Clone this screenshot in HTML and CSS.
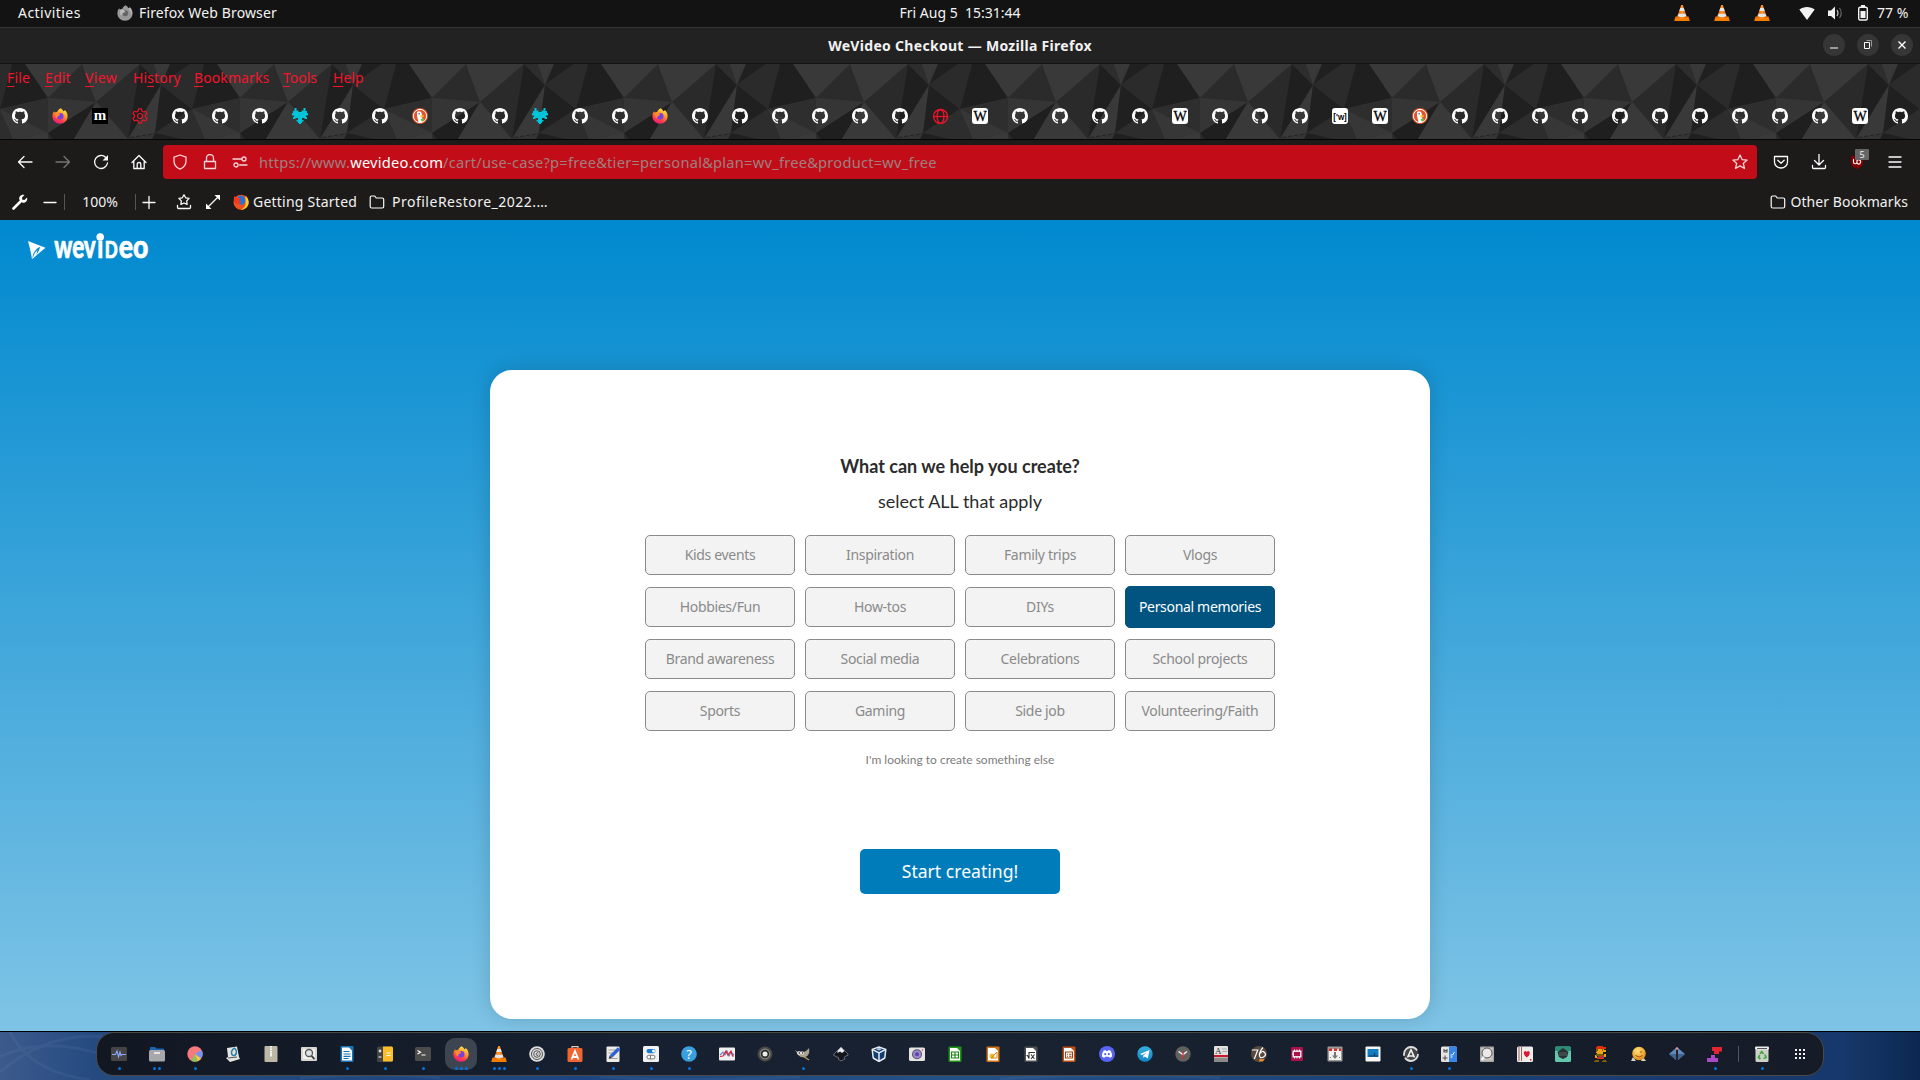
FILE: index.html
```html
<!DOCTYPE html>
<html lang="en">
<head>
<meta charset="utf-8">
<title>WeVideo Checkout</title>
<link rel="stylesheet" href="styles.css">
</head>
<body>
<svg class="defs" width="0" height="0" aria-hidden="true">
<defs>
<linearGradient id="ffg" x1=".75" y1="0" x2=".3" y2="1"><stop offset="0" stop-color="#fff04a"/><stop offset=".4" stop-color="#ff9a28"/><stop offset=".75" stop-color="#ff3a4c"/><stop offset="1" stop-color="#e3158a"/></linearGradient>
<linearGradient id="cone" x1="0" x2="1" y1="0" y2="0"><stop offset="0" stop-color="#e05a00"/><stop offset=".5" stop-color="#ff9a2c"/><stop offset="1" stop-color="#d85400"/></linearGradient>
<linearGradient id="tg" x1="0" x2="0" y1="0" y2="1"><stop offset="0" stop-color="#37aee2"/><stop offset="1" stop-color="#0f86c4"/></linearGradient>
<radialGradient id="gold" cx=".4" cy=".3" r=".7"><stop offset="0" stop-color="#ffe27a"/><stop offset="1" stop-color="#e08f14"/></radialGradient>
<symbol id="gh" viewBox="0 0 16 16"><path fill="#fff" d="M8 0C3.58 0 0 3.58 0 8c0 3.54 2.29 6.53 5.47 7.59.4.07.55-.17.55-.38 0-.19-.01-.82-.01-1.49-2.01.37-2.53-.49-2.69-.94-.09-.23-.48-.94-.82-1.13-.28-.15-.68-.52-.01-.53.63-.01 1.08.58 1.23.82.72 1.21 1.87.87 2.33.66.07-.52.28-.87.51-1.07-1.78-.2-3.64-.89-3.64-3.95 0-.87.31-1.59.82-2.15-.08-.2-.36-1.02.08-2.12 0 0 .67-.21 2.2.82.64-.18 1.32-.27 2-.27s1.36.09 2 .27c1.53-1.04 2.2-.82 2.2-.82.44 1.1.16 1.92.08 2.12.51.56.82 1.27.82 2.15 0 3.07-1.87 3.75-3.65 3.95.29.25.54.73.54 1.48 0 1.07-.01 1.93-.01 2.2 0 .21.15.46.55.38A8.01 8.01 0 0016 8c0-4.42-3.58-8-8-8z"/></symbol>
<symbol id="ff" viewBox="0 0 16 16"><path fill="url(#ffg)" d="M8.6.2c1.6 1 2.4 2 2.7 3.1 1-.1 1.300-.6 1.400-1.200C14.600 3.600 15.600 5.800 15.600 8.300c0 4.200-3.400 7.500-7.600 7.500S.4 12.500.4 8.300C.4 6.300 1 4.600 2.200 3.300l.5 1.300c.7-.6 1.600-.8 2.500-.6.400-1.600 1.600-2.900 3.400-3.800z"/><circle cx="8.200" cy="8.300" r="3.300" fill="#7a3fe0"/><path fill="#ff8b2a" d="M3.200 5.200c1.800-.9 3.700-.3 5 1.100-.2 1.300-1.600 1.300-2.500 2-.7.800 0 2.400-1.400 1.900C3 8.900 2.700 6.700 3.200 5.200z"/></symbol>
<symbol id="ffgray" viewBox="0 0 16 16"><path fill="#999" d="M8.600.2c1.600 1 2.400 2 2.700 3.100 1-.1 1.300-.6 1.400-1.200C14.600 3.600 15.600 5.800 15.600 8.300c0 4.200-3.400 7.500-7.600 7.500S.4 12.500.4 8.300C.4 6.300 1 4.600 2.200 3.300l.5 1.300c.7-.6 1.600-.8 2.500-.6.400-1.600 1.600-2.900 3.400-3.800z"/><circle cx="8.200" cy="8.300" r="3" fill="#666"/><path fill="#bbb" d="M3.200 5.200c1.800-.9 3.700-.3 5 1.100-.2 1.300-1.600 1.300-2.500 2-.7.800 0 2.400-1.400 1.900C3 8.900 2.700 6.700 3.200 5.200zM11.500 4c2 1.500 3 4 2.300 6.500L15 8C15 6 14 4 12.600 2.500z"/></symbol>
<symbol id="ffold" viewBox="0 0 16 16"><circle cx="8" cy="8.300" r="7.500" fill="#f4511e"/><path fill="#ffc928" d="M12.500 1.500c4 3.500 4.300 9 .8 12.300-1.500 1.300-3.800 2.200-5.800 2 4-1 5.500-4.500 5-8z"/><path fill="#2a6fd6" d="M5 2.500C7.500.5 11 1.500 12 5c.8 3-.5 5.500-3.300 5.700C6.500 10.700 5 9.500 4.800 8z"/><path fill="#f33a1d" d="M1 3.500l.5-1.500L4 4c1.500-.3 3 0 3.500.7L6 6.500l2 1.800-2 1.500-3 .2L.7 7z"/></symbol>
<symbol id="m" viewBox="0 0 16 16"><path d="M0 0h16v16H0z"/><text x="8" y="12" text-anchor="middle" font-family="Liberation Serif, serif" font-weight="700" font-size="15" fill="#fff">m</text></symbol>
<symbol id="w" viewBox="0 0 16 16"><rect width="16" height="16" rx="3" fill="#fff"/><text x="8" y="12.800" text-anchor="middle" font-family="Liberation Serif, serif" font-size="14" fill="#000" stroke="#000" stroke-width=".3">W</text></symbol>
<symbol id="wb" viewBox="0 0 16 16"><rect width="16" height="16" rx="3" fill="#fff"/><text x="1.300" y="12" font-family="Liberation Sans, sans-serif" font-weight="700" font-size="9.500" textLength="13.500" lengthAdjust="spacingAndGlyphs">['w]</text></symbol>
<symbol id="gear" viewBox="0 0 16 16"><g fill="none" stroke="#e8142a" stroke-width="1.200" stroke-linejoin="round"><path d="M6.600.8h2.800l.5 2.300 1.500.9 2.300-.8 1.400 2.500L13.400 7.300v1.500l1.700 1.600-1.400 2.400-2.300-.7-1.500.9-.5 2.200H6.600l-.5-2.200-1.500-.9-2.300.7-1.400-2.400 1.700-1.600V7.300L.9 5.700l1.400-2.500 2.300.8 1.500-.9z"/><circle cx="8" cy="8" r="2.500"/></g></symbol>
<symbol id="teal" viewBox="0 0 16 16"><path fill="#00c4d8" d="M2.500 0h2v2.500h2V4h3V2.500h2V0h2v3H15v2h1v2.500h-2V9h1v2h-2.500v-1H10v2h1.500v1.500H10V15H9v1H7v-1H6v-1.500H4.500V12H6v-2H3.500v1H1V9h1V7.500H0V5h1V3h1.500z"/></symbol>
<symbol id="ddg" viewBox="0 0 16 16"><circle cx="8" cy="8" r="8" fill="#e2552c"/><circle cx="8" cy="8" r="6.600" fill="none" stroke="#fff"/><path fill="#fff" d="M5 4c2-1.500 4.500-.5 4.800 2l.7 8c-1.500.6-3 .5-4 0L5 8z"/><path fill="#fdc31b" d="M8.500 7.300l4 .3-1.500 1.500-2.500.3z"/><path fill="#67bd47" d="M8.500 11l3.500-.8v3l-3-.5z"/><circle cx="7.200" cy="5.800" r=".8" fill="#2d4f8e"/></symbol>
<symbol id="globe" viewBox="0 0 16 16"><g fill="none" stroke="#f0142b" stroke-width="1.300"><circle cx="8.500" cy="8.500" r="7"/><ellipse cx="8.500" cy="8.500" rx="3.400" ry="7"/><path d="M1.500 8.500h14"/></g></symbol>
<symbol id="vlc" viewBox="0 0 16 16"><path fill="#f57e00" d="M1.500 11.500h13L15.800 16H.2z"/><path fill="url(#cone)" d="M7.200 0h1.600l4.200 12.500c-2 1.300-8 1.300-10 0z"/><path fill="#e6e6e6" d="M6.300 3h3.400l1 3H5.300zM4.400 8.700h7.200l.8 2.500c-2 1-6.800 1-8.800 0z"/></symbol>
<symbol id="folder" viewBox="0 0 16 16"><path fill="none" stroke="#fbfbfe" stroke-width="1.200" stroke-linejoin="round" d="M1.200 12.500v-9c0-1 .5-1.500 1.500-1.500h3l1.500 2h6c1 0 1.500.5 1.500 1.500v7c0 1-.5 1.500-1.500 1.500H2.700c-1 0-1.500-.5-1.500-1.500z"/></symbol>
<symbol id="d-mon" viewBox="0 0 16 16"><rect y="1" width="16" height="14" rx="1.500" fill="#454545"/><path d="M1 8.500h3.500L6 5l1.500 6L9 6l1 3.500 1-1h4" fill="none" stroke="#8ba8ff" stroke-width="1.100"/></symbol>
<symbol id="d-files" viewBox="0 0 16 16"><path fill="#1766b8" d="M1 2q0-1 1-1h4l1.500 1.500H14q1 0 1 1V7H1z"/><rect y="4" width="16" height="11.500" rx="1.500" fill="#a8a8aa"/><path d="M5 7h6" stroke="#fff" stroke-width="1.400"/></symbol>
<symbol id="d-pie" viewBox="0 0 16 16"><circle cx="8" cy="8" r="7.700" fill="#f77b7c"/><path fill="#7695ee" d="M8 8l6.500-4c1.700 2.500 1.500 6-.5 8.500z"/><path fill="#f7c64a" d="M8 8l6 4.500c-1 1.300-2 2.200-3.500 2.700z"/><path fill="#83c85a" d="M8 8l2.500 7.200c-2 .8-4 .6-6-.4z"/></symbol>
<symbol id="d-book" viewBox="0 0 16 16"><path fill="#e5e5e2" d="M2 2l10-1.500L14 11l1 2-10 3-4-4 2-1z"/><path fill="none" stroke="#2f81a8" stroke-width="1.600" d="M10 2C5 4 6 10 9 9.500s3-5 1-7"/><path d="M3 12l9-1" stroke="#555"/></symbol>
<symbol id="d-zip" viewBox="0 0 16 16"><rect x="1.500" width="13" height="16" rx="1" fill="#bdb7a6"/><path d="M8 0v8" stroke="#fff" stroke-width="2" stroke-dasharray="1.500 1"/><rect x="7" y="7" width="2" height="3.500" fill="#eee"/></symbol>
<symbol id="d-find" viewBox="0 0 16 16"><rect y="1" width="16" height="14" rx="1" fill="#d8d6cf"/><rect x="2" y="3" width="12" height="10" fill="#f1f1ee"/><circle cx="8" cy="7" r="3.500" fill="#dfe5e5" stroke="#555" stroke-width="1.300"/><path d="M10.500 10l3 3" stroke="#444" stroke-width="1.800"/></symbol>
<symbol id="d-writer" viewBox="0 0 16 16"><rect x="1.500" width="13" height="16" rx="1" fill="#1674b5"/><path fill="#fff" d="M3 1.500h7L13 4.500v10H3z"/><path d="M4.500 5.500h6M4.500 8h7M4.500 10.300h7M4.500 12.500h5" stroke="#1674b5" stroke-width="1.200"/></symbol>
<symbol id="d-calc" viewBox="0 0 16 16"><rect y=".5" width="16" height="15.500" rx="1.500" fill="#434343"/><path fill="#fcbd28" d="M6 .5h8.500q1.500 0 1.500 1.500v12q0 1.500-1.500 1.500H6z"/><path d="M1.500 5h3M3 3.500v3M1.500 11h3M9.500 7h4M9.500 9.500h4" stroke="#fff" stroke-width="1.200"/></symbol>
<symbol id="d-term" viewBox="0 0 16 16"><rect y="1" width="16" height="14" rx="1.500" fill="#4b4b4b"/><path d="M2.500 4.500l3 1.700-3 1.700M6.500 9h4" fill="none" stroke="#fff" stroke-width="1.200"/></symbol>
<symbol id="d-at" viewBox="0 0 16 16"><circle cx="8" cy="8" r="7.800" fill="#dedede"/><g fill="none" stroke="#555"><circle cx="8" cy="8" r="5.500" /><circle cx="8" cy="8" r="3.300"/><path d="M9.500 7Q8 5.800 6.900 8q.6 2.500 2.600 1"/></g></symbol>
<symbol id="d-soft" viewBox="0 0 16 16"><path d="M5 3V.6h6V3" fill="none" stroke="#e6c9a8" stroke-width="1.200"/><rect x=".5" y="2" width="15" height="14" rx="1.500" fill="#f06530"/><path d="M4.500 13.500L8 5l3.500 8.500M5.500 11h5" fill="none" stroke="#fff" stroke-width="1.800"/></symbol>
<symbol id="d-edit" viewBox="0 0 16 16"><rect x="1.500" y=".5" width="13" height="15.500" rx="1" fill="#ecece7"/><path d="M3.500 4h7M3.500 7h5M3.500 12.500h9" stroke="#a99f90"/><path d="M14 2.500L6 10.500" stroke="#2e62d9" stroke-width="3.400"/><path d="M4 12.500l.6-3 2.300 2.200z" fill="#222"/></symbol>
<symbol id="d-tweak" viewBox="0 0 16 16"><rect width="16" height="16" rx="1.500" fill="#f1f1f1"/><rect x="3.500" y="3" width="9" height="4.200" rx="2.100" fill="#1679d6"/><circle cx="10.500" cy="5.100" r="1.500" fill="#fff"/><rect x="4" y="9.300" width="8" height="3.600" rx="1.800" fill="#fff" stroke="#777"/><path d="M7.500 9.300v3.600" stroke="#777"/></symbol>
<symbol id="d-help" viewBox="0 0 16 16"><circle cx="8" cy="8" r="7.800" fill="#3a9fe0"/><text x="8" y="12.800" text-anchor="middle" font-family="Noto Sans, sans-serif" font-size="13" fill="#fff">?</text></symbol>
<symbol id="d-plot" viewBox="0 0 16 16"><rect y="1.500" width="16" height="13" rx="1" fill="#f0f0f0"/><path d="M1 9l3-3 2 3 2-4 2 5 2-4 3 3" fill="none" stroke="#5d83c9" stroke-width="1.100"/><path d="M1 10.500l3-.5 3-5 2 4 3-4 1.500 5H15" fill="none" stroke="#dc2035" stroke-width="1.200"/></symbol>
<symbol id="d-spk" viewBox="0 0 16 16"><circle cx="8" cy="8" r="7.500" fill="#494846"/><circle cx="8" cy="8" r="4.800" fill="#2a2a29" stroke="#898783" stroke-width="1.200"/><circle cx="8" cy="8" r="2.500" fill="#ecece8"/></symbol>
<symbol id="d-gimp" viewBox="0 0 16 16"><path fill="#aaa28f" d="M0 4l3 2c2-1 5-.5 6 0 2-1 4-2.500 5-4 1 5-.5 8-4 9-4 .8-7-1-8-4z"/><circle cx="4" cy="7" r="1.800" fill="#fff"/><circle cx="7.500" cy="7" r="1.500" fill="#fff"/><circle cx="4.300" cy="7" r=".8"/><circle cx="7.600" cy="7" r=".7"/><path d="M8 10l6 4" stroke="#c3a16a" stroke-width="1.200"/></symbol>
<symbol id="d-ink" viewBox="0 0 16 16"><path fill="#15161c" stroke="#888b99" stroke-width=".7" d="M8 1l7 7q1 1.500-2 2l-2 1.500 1 1.500-4 2-3-2 1-1-4-2q-2.500-.5-1-2z"/><path fill="#eceef5" d="M8 1.300l3.500 3.700L9 7 7 5.500 4.500 7V5z"/></symbol>
<symbol id="d-vbox" viewBox="0 0 16 16"><path fill="#123d70" stroke="#e5ebf3" stroke-width="1.500" stroke-linejoin="round" d="M8 1l6.800 2.400-1 8.600L8 15.500 2.200 12l-1-8.600z"/><path d="M1.200 3.400L8 7l6.800-3.600M8 7v8" fill="none" stroke="#e5ebf3" stroke-width="1.500"/><path d="M5 3l3-1 3 1-3 1.500z" fill="#bfcbd9"/></symbol>
<symbol id="d-cam" viewBox="0 0 16 16"><rect y="1.500" width="16" height="13.500" rx="1.500" fill="#e4e4e4"/><circle cx="8" cy="8.200" r="5" fill="#555"/><circle cx="8" cy="8.200" r="4" fill="#9c86d8"/><circle cx="8" cy="8.200" r="2" fill="#5d45a0"/><circle cx="13.500" cy="4" r=".7" fill="#e23"/></symbol>
<symbol id="d-sheet" viewBox="0 0 16 16"><rect x="1.500" y=".5" width="13" height="15.500" rx="1" fill="#1f9316"/><path fill="#fff" d="M3 2h7l3 3v9.500H3z"/><path d="M4.500 6h7v6h-7zM4.500 9h7M8 6v6" fill="none" stroke="#18870f" stroke-width="1.100"/></symbol>
<symbol id="d-draw" viewBox="0 0 16 16"><rect x="1.500" y=".5" width="13" height="15.500" rx="1" fill="#cf7415"/><path fill="#fff" d="M3 2h7l3 3v9.500H3z"/><circle cx="7" cy="10" r="2.500" fill="#f1b92f"/><path d="M6 12h6V6z" fill="none" stroke="#d88515"/></symbol>
<symbol id="d-math" viewBox="0 0 16 16"><rect x="1.500" y=".5" width="13" height="15.500" rx="1" fill="#505050"/><path fill="#fff" d="M3 2h7l3 3v9.500H3z"/><path d="M3.500 9.500l1 0 1.500 3V6.500h6M8 8.500l3.500 4.500M11.500 8.500L8 13" fill="none" stroke="#333" stroke-width="1.100"/></symbol>
<symbol id="d-imp" viewBox="0 0 16 16"><rect x="1.500" y=".5" width="13" height="15.500" rx="1" fill="#bd4d13"/><path fill="#fff" d="M3 2h7l3 3v9.500H3z"/><path d="M4.500 6h7v6h-7zM6 8.200h1M8 8.200h2.500M6 10.200h1M8 10.200h2.500" fill="none" stroke="#a53f0a" stroke-width="1.100"/></symbol>
<symbol id="d-disc" viewBox="0 0 16 16"><circle cx="8" cy="8" r="8" fill="#5865f2"/><path fill="#fff" d="M4.500 4.800l2-.8.600.9h1.800l.6-.9 2 .8c1.200 1.800 1.700 3.800 1.500 5.700L10.800 12l-.8-1.200H6L5.200 12 3 10.500c-.2-1.900.3-3.900 1.500-5.700z"/><circle cx="6.200" cy="8.200" r="1.100" fill="#5865f2"/><circle cx="9.800" cy="8.200" r="1.100" fill="#5865f2"/></symbol>
<symbol id="d-tele" viewBox="0 0 16 16"><circle cx="8" cy="8" r="7.700" fill="url(#tg)"/><path fill="#fff" d="M3 8l9.500-4-1.700 8.500-3-2-1.300 1.500-.3-2.500L10 6.500 5 9z"/></symbol>
<symbol id="d-clock" viewBox="0 0 16 16"><circle cx="8" cy="8" r="7.700" fill="#626160"/><path d="M3.500 5.500L8 8.500 12 5.500" fill="none" stroke="#f4f4f4" stroke-width="1.500"/><path d="M8 5.500V13" stroke="#db2c3a" stroke-width="1.200"/></symbol>
<symbol id="d-dict" viewBox="0 0 16 16"><rect x="1" width="14" height="16" rx="1" fill="#e3e1df"/><path fill="#c9192b" d="M1 9h14v2H1z"/><path fill="#8c8a88" d="M1 11.500h14V15q0 1-1 1H2q-1 0-1-1z"/><text x="2" y="8.300" font-family="Liberation Serif, serif" font-size="9" fill="#333">A</text><path d="M9 3h5M9 5.500h5" stroke="#aaa"/></symbol>
<symbol id="d-76" viewBox="0 0 16 16"><circle cx="8" cy="8" r="8" fill="#57493f"/><path fill="#e28a24" d="M8.500 13h5l-1.500 2.500H8z"/><path d="M.8 4h6L3.300 13M12 1.500Q8 6 8.500 9.500t4 1.500 1-4.500-4 1" fill="none" stroke="#fff" stroke-width="1.200"/></symbol>
<symbol id="d-chip" viewBox="0 0 16 16"><rect x="2" y="1" width="12" height="14" rx="1" fill="#aa1249"/><rect x="4.200" y="5.200" width="7.600" height="5.600" fill="#aa1249" stroke="#fff" stroke-width="1.300"/><path d="M5.500 3.500v2M8 3.500v2M10.500 3.500v2M5.500 10.500v2M8 10.500v2M10.500 10.500v2M3 8h1" stroke="#fff"/></symbol>
<symbol id="d-down" viewBox="0 0 16 16"><rect x=".5" y=".5" width="15" height="15" rx="1" fill="#9a9995"/><path fill="#f4f3f1" d="M2 3h12v11H2z"/><path fill="#e12727" d="M2 2.500h3V5H2zM7 2.500h3V5H7zM12 2.500h2V5h-2z"/><path fill="#777" d="M7 6h2v3.500h2L8 13 5 9.500h2zM3 11h1v1H3zM12 11h1v1h-1z"/></symbol>
<symbol id="d-scr" viewBox="0 0 16 16"><rect x=".5" y=".5" width="15" height="15" rx="1" fill="#f7f7f5"/><path fill="#117dc0" d="M2.500 3h11v8h-11z"/><path d="M9.500 7v3.500M4 10h9" stroke="#083960" stroke-width="1.200"/></symbol>
<symbol id="d-upd" viewBox="0 0 16 16"><circle cx="8" cy="8" r="7.500" fill="#444"/><circle cx="8" cy="8" r="7" fill="none" stroke="#dedede" stroke-width="1.800" stroke-dasharray="18 2 20 4"/><path d="M4.500 11.500L8 4l3.500 7.500M5.500 10h5" fill="none" stroke="#f3f3f3" stroke-width="1.600"/></symbol>
<symbol id="d-conv" viewBox="0 0 16 16"><rect y=".5" width="16" height="15.500" rx="1.500" fill="#e6e4e0"/><path fill="#3785e6" d="M8 .5h6.500Q16 .5 16 2v12.500q0 1.500-1.500 1.500H8z"/><path d="M3 3v3h3V3M3 4.500h3M1.500 12h5M4 9.500v5" fill="none" stroke="#555" stroke-width="1.100"/><path d="M9.500 9h2l2-3M9.500 11h2" fill="none" stroke="#fff"/></symbol>
<symbol id="d-mag" viewBox="0 0 16 16"><rect x="1" y=".5" width="14" height="15.500" rx="1" fill="#aaa9a5"/><path fill="#c8c7c2" d="M2.500 2h11v12.500h-11z"/><circle cx="8" cy="7" r="5" fill="#eaeaea" stroke="#555"/><path d="M5 11l-2.500 3" stroke="#fff" stroke-width="2"/></symbol>
<symbol id="d-card" viewBox="0 0 16 16"><rect y=".5" width="16" height="15.500" rx="1.500" fill="#efedea"/><path d="M2 1v14M4.500 1v14" stroke="#966"/><path fill="#df1637" d="M9.800 11.500C4.500 8 7.500 3 9.800 6c2.300-3 5.300 2 0 5.500zM13 13h1.500v1.500H13z"/></symbol>
<symbol id="d-mah" viewBox="0 0 16 16"><rect y=".5" width="16" height="15.500" rx="1.500" fill="#62c7ad"/><path fill="#2b8c78" d="M0 2Q0 .5 1.500.5h13Q16 .5 16 2v3H0z"/><path fill="#2a3034" d="M8 2l5.500 4L12 11l-4 2-4-2-1.500-5z"/><path d="M4 7h8M4 9h8" stroke="#52635d"/></symbol>
<symbol id="d-mario" viewBox="0 0 16 16" shape-rendering="crispEdges"><path fill="#e32c0d" d="M4 0h6v1h3v2H3V1h1zM5 9h6v4H4v-2h1z"/><path fill="#eba51b" d="M4 3h7v1h2v2h-3v2H4V7H3V5h1zM2 9h2v3H2zM11 8h2v3h-2z"/><path fill="#776000" d="M3 3h2v2H4v1H3zM9 3h1v2H9zM3 8h7v2H3zM2 14h4v2H1v-1h1zM10 14h3v1h1v1h-5z"/><path fill="#2d56c9" d="M6 10h1v2H6zM9 10h1v2H9z"/></symbol>
<symbol id="d-ball" viewBox="0 0 16 16"><path fill="#d8d3c8" d="M2 11l-2 4h5zM12 11l3 4h-5z"/><circle cx="8" cy="7.500" r="6.800" fill="url(#gold)"/><path d="M4.500 9.500q4 3 7 0M9 6h2" fill="none" stroke="#a54b25"/></symbol>
<symbol id="d-dia" viewBox="0 0 16 16"><path fill="#6189b9" d="M0 8l7-6v12zM16 8L9 2v12z"/><path fill="#3f648f" d="M0 8h7v6zM16 8H9v6z"/><path d="M8 2v12" stroke="#272730" stroke-width="1.500"/><circle cx="8" cy="2.500" r="1.300" fill="#d99"/></symbol>
<symbol id="d-tet" viewBox="0 0 16 16"><path fill="#e32433" d="M5 1h10v4.500h-3V8H7V5H5z"/><path fill="#a94bc6" d="M4 9h4v3h3v4H0v-4h4z"/></symbol>
<symbol id="d-trash" viewBox="0 0 16 16"><rect x="1.500" y="1" width="13" height="15" rx="1.500" fill="#d0d0ca"/><rect x="1" y=".5" width="14" height="3" rx="1" fill="#eee"/><path d="M3 2.500h10" stroke="#555"/><path d="M6 7.800L7.700 5.700 9.500 8M11 8.500l1 3-2.500 1M6.500 13l-2-1.500 1.200-2.500" fill="none" stroke="#40a83b" stroke-width="1.800"/></symbol>
<symbol id="d-apps" viewBox="0 0 16 16"><path fill="#f4f4f4" d="M3 3h2v2H3zM7 3h2v2H7zM11 3h2v2h-2zM3 7h2v2H3zM7 7h2v2H7zM11 7h2v2h-2zM3 11h2v2H3zM7 11h2v2H7zM11 11h2v2h-2z"/></symbol>
</defs>
</svg>

<header class="topbar">
  <span class="activities">Activities</span>
  <svg class="ic16"><use href="#ffgray"/></svg>
  <span class="app">Firefox Web Browser</span>
  <span class="clock">Fri Aug 5&nbsp; 15:31:44</span>
  <div class="tray">
    <svg class="ic16 cone"><use href="#vlc"/></svg><svg class="ic16 cone"><use href="#vlc"/></svg><svg class="ic16 cone"><use href="#vlc"/></svg>
    <svg class="wifi" width="16" height="16" viewBox="0 0 16 16"><path fill="#f2f2f2" d="M.3 4.500C4.500 1 11.500 1 15.700 4.500L8 15z"/></svg>
    <svg class="vol" width="16" height="16" viewBox="0 0 16 16"><path fill="#f2f2f2" d="M1 5.500h3L8 1.500v13L4 11H1z"/><path d="M10 5q2 3 0 6" fill="none" stroke="#bbb" stroke-width="1.200"/><path d="M12.500 3q3.500 5 0 10" fill="none" stroke="#666" stroke-width="1.200"/></svg>
    <svg class="bat" width="12" height="16" viewBox="0 0 12 16"><path fill="#f2f2f2" d="M4 0h4v2H4zM3.500 6h5v7h-5z"/><rect x="1.700" y="2.200" width="8.600" height="12.800" rx="1.500" fill="none" stroke="#f2f2f2" stroke-width="1.400"/></svg>
    <span>77 %</span>
  </div>
</header>

<div class="titlebar">
  <span class="wintitle">WeVideo Checkout — Mozilla Firefox</span>
  <div class="winbtns">
    <i><svg width="22" height="22"><path d="M7 14h8" stroke="#fff"/></svg></i>
    <i><svg width="22" height="22"><path d="M7.500 8.500h5v6h-5z" fill="none" stroke="#fff"/><path d="M9.500 6.500h5v6" fill="none" stroke="#999"/></svg></i>
    <i><svg width="22" height="22"><path d="M7.500 7.500l7 7M14.500 7.500l-7 7" stroke="#fff" stroke-width="1.400"/></svg></i>
  </div>
</div>

<div class="theme">
  <svg class="facets" width="1920" height="75" aria-hidden="true">
    <defs><pattern id="poly" x="48" width="192" height="75" patternUnits="userSpaceOnUse">
      <path fill="#2d2d2d" d="M0 0h192v75H0z"/>
      <path fill="#393939" d="M0 34L-23 0H34zM192 34L169 0H192z"/>
      <path fill="#2b2b2b" d="M0 34L34 0 48 38z"/>
      <path fill="#393939" d="M34 0H92L48 38z"/>
      <path fill="#2a2a2a" d="M92 0L48 38 80 75z"/>
      <path fill="#1f1f1f" d="M92 0l21 21-33 54z"/>
      <path fill="#2d2d2d" d="M92 0h14l7 21z"/>
      <path fill="#383838" d="M106 0h16l-9 21z"/>
      <path fill="#202020" d="M122 0h20l-29 21z"/>
      <path fill="#2b2b2b" d="M142 0h14l-12 45-31-24z"/>
      <path fill="#1f1f1f" d="M156 0h13l23 34-48 11z"/>
      <path fill="#393939" d="M113 21L80 75l27-6z"/>
      <path fill="#202020" d="M113 21l31 24-37 24z"/>
      <path fill="#2d2d2d" d="M144 45l-37 24 50 6z"/>
      <path fill="#373737" d="M144 45l48 24-35 6z"/>
      <path fill="#2e2e2e" d="M144 45l48-11v35z"/>
      <path fill="#353535" d="M0 34l48 4L0 69z"/>
      <path fill="#1f1f1f" d="M48 38L0 69l4 6h22z"/>
      <path fill="#393939" d="M48 38L26 75h54z"/>
      <path fill="#343434" d="M80 75l27-6-3 6z"/>
      <path fill="#202020" d="M107 69l-3 6h30z"/>
      <path fill="#393939" d="M192 69l-35 6h35z"/>
      <path d="M82 73.500l25-4" stroke="#222" stroke-dasharray="4 2"/>
    </pattern></defs>
    <rect width="1920" height="75" fill="url(#poly)"/>
  </svg>
  <nav class="menubar">
    <span class="m1"><u>F</u>ile</span><span class="m2"><u>E</u>dit</span><span class="m3"><u>V</u>iew</span><span class="m4">Hi<u>s</u>tory</span><span class="m5"><u>B</u>ookmarks</span><span class="m6"><u>T</u>ools</span><span><u>H</u>elp</span>
  </nav>
  <div class="tabs">
    <svg><use href="#gh"/></svg><svg><use href="#ff"/></svg><svg><use href="#m"/></svg><svg><use href="#gear"/></svg><svg><use href="#gh"/></svg><svg><use href="#gh"/></svg><svg><use href="#gh"/></svg><svg><use href="#teal"/></svg>
    <svg><use href="#gh"/></svg><svg><use href="#gh"/></svg><svg><use href="#ddg"/></svg><svg><use href="#gh"/></svg><svg><use href="#gh"/></svg><svg><use href="#teal"/></svg><svg><use href="#gh"/></svg><svg><use href="#gh"/></svg>
    <svg><use href="#ff"/></svg><svg><use href="#gh"/></svg><svg><use href="#gh"/></svg><svg><use href="#gh"/></svg><svg><use href="#gh"/></svg><svg><use href="#gh"/></svg><svg><use href="#gh"/></svg><svg><use href="#globe"/></svg>
    <svg><use href="#w"/></svg><svg><use href="#gh"/></svg><svg><use href="#gh"/></svg><svg><use href="#gh"/></svg><svg><use href="#gh"/></svg><svg><use href="#w"/></svg><svg><use href="#gh"/></svg><svg><use href="#gh"/></svg>
    <svg><use href="#gh"/></svg><svg><use href="#wb"/></svg><svg><use href="#w"/></svg><svg><use href="#ddg"/></svg><svg><use href="#gh"/></svg><svg><use href="#gh"/></svg><svg><use href="#gh"/></svg><svg><use href="#gh"/></svg>
    <svg><use href="#gh"/></svg><svg><use href="#gh"/></svg><svg><use href="#gh"/></svg><svg><use href="#gh"/></svg><svg><use href="#gh"/></svg><svg><use href="#gh"/></svg><svg><use href="#w"/></svg><svg><use href="#gh"/></svg>
  </div>
</div>

<div class="navbar">
  <span class="nb"><svg viewBox="0 0 16 16"><path d="M15 8H1.500M7 2.500L1.500 8 7 13.500"/></svg></span>
  <span class="nb dim"><svg viewBox="0 0 16 16"><path d="M1 8h13.500M9 2.500L14.500 8 9 13.500"/></svg></span>
  <span class="nb"><svg viewBox="0 0 16 16"><path d="M14.500 9A6.500 6.500 0 1 1 12.800 3.500"/><path d="M15 1v5.500H9.500z" fill="#fbfbfe" stroke="none"/></svg></span>
  <span class="nb"><svg viewBox="0 0 16 16"><path d="M1 8.500L8 1.500l7 7M2.800 7v7.500h10.400V7M6.200 14.500V10q0-1.500 1.800-1.500T9.800 10v4.500"/></svg></span>
  <div class="urlbar">
    <span class="ub"><svg viewBox="0 0 16 16"><path d="M8 1l6 2.200v3.500c0 4-2.500 7-6 8.500-3.500-1.500-6-4.500-6-8.500V3.200z"/></svg></span>
    <span class="ub"><svg viewBox="0 0 16 16"><path d="M2.500 7.500h11v7h-11zM4.500 7.500V4a3.500 3.500 0 0 1 7 0v3.500"/></svg></span>
    <span class="ub"><svg viewBox="0 0 16 16"><path d="M1 5h8.500M7.500 11H15"/><circle cx="12" cy="5" r="2"/><circle cx="4" cy="11" r="2"/></svg></span>
    <span class="url">https://www.<b>wevideo.com</b>/cart/use-case?p=free&amp;tier=personal&amp;plan=wv_free&amp;product=wv_free</span>
    <span class="ub"><svg viewBox="0 0 16 16"><path d="M8 1l2.100 4.600 5 .5-3.800 3.400 1.200 5L8 11.900l-4.500 2.600 1.200-5L.9 6.100l5-.5z"/></svg></span>
  </div>
  <span class="nb"><svg viewBox="0 0 16 16"><path d="M1.500 2.500h13V8a6.500 6 0 0 1-13 0zM4.800 6.200L8 9.300l3.200-3.100"/></svg></span>
  <span class="nb"><svg viewBox="0 0 16 16"><path d="M8 0v10.500M3.500 6.500L8 11l4.500-4.500M1.500 11.500v2q0 1 1 1h11q1 0 1-1v-2"/></svg></span>
  <span class="nb ublock"><svg viewBox="0 0 16 16"><path fill="#800000" stroke="none" d="M1 1.500q4-.5 7-1.500 3 1 7 1.500V8c0 4-3 6.500-7 8-4-1.500-7-4-7-8z"/><path d="M4 5v3q0 2 2 2t2-2V6q2-1.500 3.500 0t0 3.500T8 9"/></svg><em>5</em></span>
  <span class="nb"><svg viewBox="0 0 16 16"><path d="M2 3h12M2 8h12M2 13h12"/></svg></span>
</div>

<div class="bookbar">
  <span class="bb wrench"><svg viewBox="0 0 16 16"><path d="M1.500 14.500L9 7" stroke-width="2.600"/><path fill="#fbfbfe" stroke="none" d="M12.500 1l-2.500 2.500.3 2.200 2.200.3L15 3.500c1 3-1.500 6-4.500 5.200L7.300 5.500C6.500 2.500 9.500 0 12.500 1z"/></svg></span>
  <span class="bb minus"><svg viewBox="0 0 16 16"><path d="M2 8.500h12"/></svg></span>
  <span class="pct">100%</span>
  <span class="bb plus"><svg viewBox="0 0 16 16"><path d="M2 8.500h12M8 2.500v12"/></svg></span>
  <span class="bb star"><svg viewBox="0 0 16 16"><path d="M8 .8l1.700 3 3.400.6-2.400 2.500.4 3.500L8 9l-3.100 1.400.4-3.500L2.900 4.400l3.400-.6zM1.500 11.500v2q0 1 1 1h11q1 0 1-1v-2"/></svg></span>
  <span class="bb arrows"><svg viewBox="0 0 16 16"><path d="M3 13L13 3"/><path fill="#fbfbfe" stroke="none" d="M9.500 1H15v5.500zM1 9.500V15h5.500z"/></svg></span>
  <svg class="ic16 ffb"><use href="#ffold"/></svg><span class="gs">Getting Started</span>
  <svg class="ic16 fold"><use href="#folder"/></svg><span class="pr">ProfileRestore_2022.…</span>
  <span class="other"><svg class="ic16"><use href="#folder"/></svg>Other Bookmarks</span>
</div>

<main class="page">
  <svg class="logo" width="130" height="48" viewBox="0 -10 130 48">
    <path fill="#fff" d="M0 8l17.500 6.800L4 26q-1.500-9-4-18z"/><path d="M4.500 25Q5 17 12.500 13.500L10 19.500z" fill="#078ccf"/><path d="M5 25.500Q6 20 9.500 17L8 22.500z" fill="#fff"/>
    <text x="26.300" y="25.300" textLength="41.500" lengthAdjust="spacingAndGlyphs" font-size="32">wev</text>
    <text x="69.200" y="25.300" textLength="6" lengthAdjust="spacingAndGlyphs" font-size="32">i</text>
    <text x="76.800" y="25.300" textLength="13" lengthAdjust="spacingAndGlyphs" font-size="23">D</text>
    <text x="90.800" y="25.300" textLength="29.500" lengthAdjust="spacingAndGlyphs" font-size="32">eo</text>
    <circle cx="72.200" cy="4" r="3.800" fill="#fff"/>
  </svg>
  <section class="card">
    <h1>What can we help you create?</h1>
    <p class="sub">select ALL that apply</p>
    <div class="choices">
      <button>Kids events</button><button>Inspiration</button><button>Family trips</button><button>Vlogs</button>
      <button>Hobbies/Fun</button><button>How-tos</button><button>DIYs</button><button class="on">Personal memories</button>
      <button>Brand awareness</button><button>Social media</button><button>Celebrations</button><button>School projects</button>
      <button>Sports</button><button>Gaming</button><button>Side job</button><button>Volunteering/Faith</button>
    </div>
    <p class="else">I'm looking to create something else</p>
    <button class="start">Start creating!</button>
  </section>
</main>

<footer class="desktop">
  <svg class="wall" width="1920" height="48" viewBox="0 0 1920 48" preserveAspectRatio="none" aria-hidden="true"><g fill="none" stroke="#7f9bc5" stroke-opacity=".1" stroke-width="3"><path d="M-10 30Q40 0 110 25M0 40Q60 -10 130 10M10 0Q30 40 90 48M300 46q80-6 140 0M600 45q90 5 200 0M1000 47q100-7 220-1"/></g></svg>
  <div class="dock">
    <span class="d n1"><svg><use href="#d-mon"/></svg></span>
    <span class="d n2"><svg><use href="#d-files"/></svg></span>
    <span class="d n1"><svg><use href="#d-pie"/></svg></span>
    <span class="d"><svg><use href="#d-book"/></svg></span>
    <span class="d"><svg><use href="#d-zip"/></svg></span>
    <span class="d"><svg><use href="#d-find"/></svg></span>
    <span class="d n1"><svg><use href="#d-writer"/></svg></span>
    <span class="d n1"><svg><use href="#d-calc"/></svg></span>
    <span class="d n1"><svg><use href="#d-term"/></svg></span>
    <span class="d n3 active"><svg><use href="#ff"/></svg></span>
    <span class="d n3"><svg><use href="#vlc"/></svg></span>
    <span class="d n1"><svg><use href="#d-at"/></svg></span>
    <span class="d n1"><svg><use href="#d-soft"/></svg></span>
    <span class="d n1"><svg><use href="#d-edit"/></svg></span>
    <span class="d n1"><svg><use href="#d-tweak"/></svg></span>
    <span class="d n1"><svg><use href="#d-help"/></svg></span>
    <span class="d"><svg><use href="#d-plot"/></svg></span>
    <span class="d"><svg><use href="#d-spk"/></svg></span>
    <span class="d n1"><svg><use href="#d-gimp"/></svg></span>
    <span class="d"><svg><use href="#d-ink"/></svg></span>
    <span class="d"><svg><use href="#d-vbox"/></svg></span>
    <span class="d"><svg><use href="#d-cam"/></svg></span>
    <span class="d"><svg><use href="#d-sheet"/></svg></span>
    <span class="d"><svg><use href="#d-draw"/></svg></span>
    <span class="d"><svg><use href="#d-math"/></svg></span>
    <span class="d"><svg><use href="#d-imp"/></svg></span>
    <span class="d"><svg><use href="#d-disc"/></svg></span>
    <span class="d"><svg><use href="#d-tele"/></svg></span>
    <span class="d"><svg><use href="#d-clock"/></svg></span>
    <span class="d"><svg><use href="#d-dict"/></svg></span>
    <span class="d"><svg><use href="#d-76"/></svg></span>
    <span class="d"><svg><use href="#d-chip"/></svg></span>
    <span class="d"><svg><use href="#d-down"/></svg></span>
    <span class="d"><svg><use href="#d-scr"/></svg></span>
    <span class="d n1"><svg><use href="#d-upd"/></svg></span>
    <span class="d n1"><svg><use href="#d-conv"/></svg></span>
    <span class="d"><svg><use href="#d-mag"/></svg></span>
    <span class="d"><svg><use href="#d-card"/></svg></span>
    <span class="d"><svg><use href="#d-mah"/></svg></span>
    <span class="d"><svg><use href="#d-mario"/></svg></span>
    <span class="d"><svg><use href="#d-ball"/></svg></span>
    <span class="d"><svg><use href="#d-dia"/></svg></span>
    <span class="d n1"><svg><use href="#d-tet"/></svg></span>
    <span class="sep"></span>
    <span class="d n1"><svg><use href="#d-trash"/></svg></span>
    <span class="d"><svg><use href="#d-apps"/></svg></span>
  </div>
</footer>
</body>
</html>
```
FILE: styles.css
```css
* { box-sizing: border-box; }
body {
  margin: 0; width: 1920px; height: 1080px; overflow: hidden;
  display: flex; flex-direction: column;
  background: #1c1b1a; color: #f2f2f2;
  font: 14px/20px "Noto Sans", sans-serif;
}
svg { display: block; flex: none; }
.defs { position: absolute; }
.ic16 { width: 16px; height: 16px; }

.topbar {
  height: 27px; flex: none; background: #131313; position: relative;
  display: flex; align-items: center; padding: 0 13px 1px 18px; white-space: nowrap;
}
.activities { width: 99px; letter-spacing: .45px; }
.app { margin-left: 6px; letter-spacing: .13px; }
.clock { position: absolute; left: 0; width: 100%; text-align: center; }
.tray { margin-left: auto; display: flex; align-items: center; width: 233px; }
.tray .cone { margin-right: 24px; }
.tray .wifi { margin-left: 5px; }
.tray .vol { margin-left: 12px; }
.tray .bat { margin: 0 8px 0 14px; }

.titlebar {
  height: 37px; flex: none; background: #222; position: relative;
  border-top: 1px solid #353535; border-bottom: 1px solid #151515;
  display: flex; align-items: center; justify-content: center; font-weight: 700; letter-spacing: .3px;
}
.winbtns { position: absolute; right: 7px; top: 6px; display: flex; gap: 12px; }
.winbtns i { width: 22px; height: 22px; border-radius: 50%; background: #363636; }

.theme { height: 76px; flex: none; position: relative; border-bottom: 1px solid #050505; }
.facets { position: absolute; left: 0; top: 0; }
.menubar {
  position: relative; display: flex; height: 28px; align-items: center; padding-left: 7px; color: #f4142b;
}
.menubar u { text-underline-offset: 3px; text-decoration-thickness: 1px; }
.m1 { width: 38px; letter-spacing: .2px; } .m2 { width: 40px; letter-spacing: .2px; }
.m3 { width: 48px; letter-spacing: .4px; } .m4 { width: 61px; letter-spacing: .1px; }
.m5 { width: 89px; letter-spacing: .1px; } .m6 { width: 50px; }
.tabs { position: relative; display: flex; gap: 24px; padding: 16px 12px 0; }
.tabs svg { width: 16px; height: 16px; }

.navbar {
  height: 44px; flex: none; background: #1c1b1a; display: flex; align-items: center; padding: 0 6px;
}
.nb, .ub, .bb { display: flex; align-items: center; justify-content: center; flex: none; position: relative; }
.nb { width: 38px; height: 34px; }
.ub { width: 30px; }
.bb { width: 16px; }
.nb svg, .ub svg, .bb svg {
  width: 16px; height: 16px; fill: none; stroke: #fbfbfe; stroke-width: 1.3;
  stroke-linecap: round; stroke-linejoin: round;
}
.dim { opacity: .4; }
.urlbar {
  width: 1594px; height: 34px; margin: 0 5px; border-radius: 4px; background: #c20d19;
  display: flex; align-items: center; padding: 0 2px;
}
.ub svg { stroke: #f8d5d8; }
.url { flex: 1; margin: 0 0 0 4px; color: #a07f7f; font-size: 14.67px; letter-spacing: .23px; }
.url b { font-weight: 400; color: #fff; }
.ublock svg { width: 14px; height: 16px; }
.ublock em {
  position: absolute; right: 7px; top: 4px; width: 14px; height: 11px; background: #666;
  font: 9px/11px "Noto Sans", sans-serif; text-align: center; border-radius: 1px;
}

.bookbar {
  height: 36px; flex: none; background: #1c1b1a; display: flex; align-items: center; padding: 0 12px 1px; white-space: nowrap;
}
.minus { margin-left: 14px; }
.pct {
  width: 72px; height: 16px; line-height: 16px; margin: 0 5px 0 6px; text-align: center;
  border-left: 1px solid #555; border-right: 1px solid #555;
}
.star { margin-left: 19px; }
.arrows { margin-left: 13px; }
.ffb { margin: 0 4px 0 12px; }
.gs { width: 116px; letter-spacing: .23px; }
.fold { margin-right: 7px; }
.pr { letter-spacing: .5px; }
.other { margin-left: auto; display: flex; align-items: center; gap: 4px; letter-spacing: .08px; }

.page {
  height: 811px; flex: none; position: relative; overflow: hidden;
  background: linear-gradient(#0089cf, #7fc4e6); padding: 3px 0 0 28px;
}
.logo text { font-family: Lato, sans-serif; font-weight: 900; fill: #fff; stroke: #fff; stroke-width: .7; }
.card {
  width: 940px; height: 649px; margin: 99px 0 0 462px; border-radius: 22px; background: #fff;
  box-shadow: 0 0 20px rgba(0, 0, 0, .16);
  display: flex; flex-direction: column; align-items: center; color: #2b2b2b;
}
h1 { margin: 84px 0 0; font: 700 18px/24px Lato, sans-serif; }
.sub { margin: 11px 0 0; font: 18px/24px Lato, sans-serif; }
.choices { margin-top: 22px; display: grid; grid-template-columns: repeat(4, 150px); gap: 12px 10px; }
.choices button {
  height: 40px; padding: 0 0 2px; border: 1px solid #8a8a8a; border-radius: 5px; background: #f3f3f3;
  color: #8a8a8a; font: 14px "Noto Sans", sans-serif; letter-spacing: -.32px;
}
.choices .on { height: 42px; margin: -1px 0; border-color: #00547f; background: #00547f; color: #fff; }
.else { margin: 19px 0 0; font: 12px/20px Lato, sans-serif; color: #7c7c7c; }
.start {
  width: 200px; height: 45px; margin-top: 79px; padding: 0 0 2px; border: 0; border-radius: 5px; background: #007cbb;
  color: #fff; font: 17.6px "Noto Sans", sans-serif;
}

.desktop {
  height: 49px; flex: none; position: relative; border-top: 1px solid #000; padding: 0 0 0 96px;
  background: linear-gradient(90deg, #3d5a8c, #244a80 5%, #1d4480 30%, #245089 50%, #1a3f78 75%, #17386c 96%, #0c2850);
}
.wall { position: absolute; left: 0; top: 0; }
.dock {
  position: relative; width: 1728px; height: 44px; border: 1px solid #4b4943; border-radius: 18px;
  background: linear-gradient(90deg, #121722, #162030 30%, #182231 55%, #151b27);
  display: flex; align-items: center; padding-left: 3px;
}
.d { width: 38px; height: 32px; flex: none; display: flex; align-items: center; justify-content: center; position: relative; }
.d svg { width: 16px; height: 16px; position: relative; }
.n1::after, .n2::after, .n3::after {
  content: ""; position: absolute; left: 17.500px; bottom: 0; width: 3px; height: 3px; border-radius: 50%; background: #0073e5;
}
.n2::after { left: 15px; box-shadow: 5px 0 #0073e5; }
.n3::after { box-shadow: -5px 0 #0073e5, 5px 0 #0073e5; }
.active::before { content: ""; position: absolute; left: 3px; top: 0; width: 32px; height: 32px; border-radius: 10px; background: #3d4550; }
.sep { width: 1px; height: 16px; background: #50555c; margin: 0 4px; }
```
